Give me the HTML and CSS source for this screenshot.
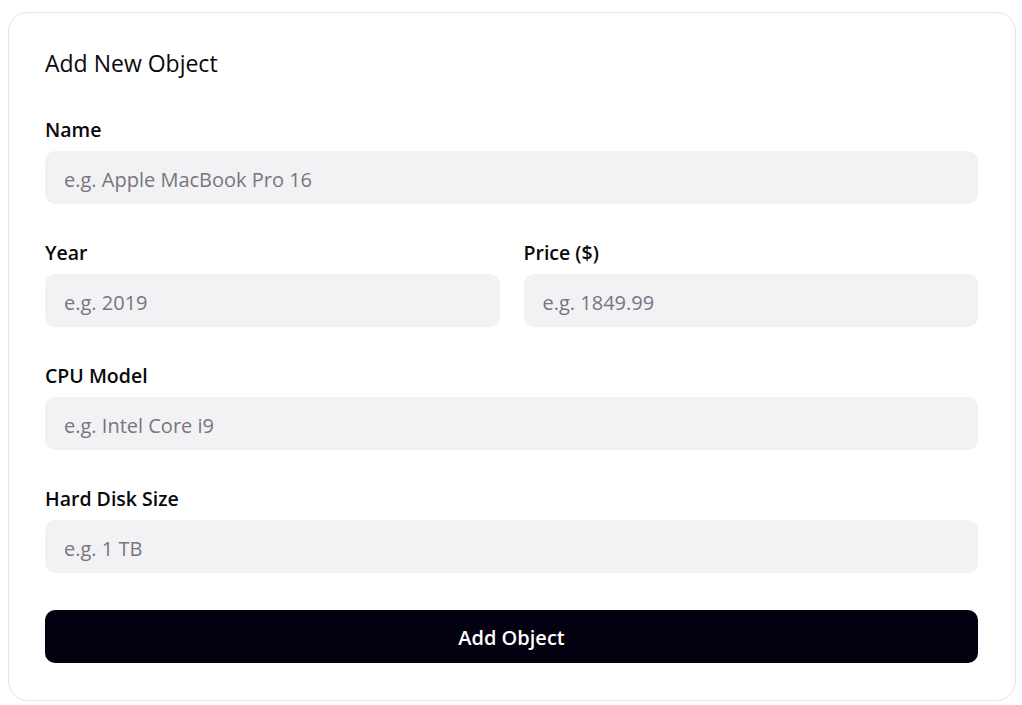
FILE: index.html
```html
<!DOCTYPE html>
<html lang="en">
<head>
<meta charset="utf-8">
<title>Add New Object</title>
<link rel="stylesheet" href="styles.css">
</head>
<body>
<form class="card">
  <h2 class="title">Add New Object</h2>
  <div class="fields">
    <div class="field">
      <label class="label" for="name">Name</label>
      <input class="input" id="name" type="text" placeholder="e.g. Apple MacBook Pro 16">
    </div>
    <div class="row">
      <div class="field">
        <label class="label" for="year">Year</label>
        <input class="input" id="year" type="text" placeholder="e.g. 2019">
      </div>
      <div class="field">
        <label class="label" for="price">Price ($)</label>
        <input class="input" id="price" type="text" placeholder="e.g. 1849.99">
      </div>
    </div>
    <div class="field">
      <label class="label" for="cpu">CPU Model</label>
      <input class="input" id="cpu" type="text" placeholder="e.g. Intel Core i9">
    </div>
    <div class="field">
      <label class="label" for="disk">Hard Disk Size</label>
      <input class="input" id="disk" type="text" placeholder="e.g. 1 TB">
    </div>
    <button class="button" type="button">Add Object</button>
  </div>
</form>
</body>
</html>
```

FILE: styles.css
```css
* { box-sizing: border-box; }
html, body { margin: 0; background: #ffffff; }
body {
  padding: 12px 6px 0 8px;
  font-family: "Open Sans", "Noto Sans", sans-serif;
  color: #09090b;
}
.card {
  width: 1008px;
  height: 689px;
  border: 1px solid #e4e4e7;
  border-radius: 20px;
  padding: 36px 37px 36px 36px;
  background: #ffffff;
}
.title {
  margin: 0;
  font-size: 23px;
  line-height: 28px;
  font-weight: 400;
}
.fields {
  margin-top: 41px;
  display: flex;
  flex-direction: column;
  gap: 37px;
}
.field {
  display: flex;
  flex-direction: column;
  gap: 9px;
}
.row {
  display: grid;
  grid-template-columns: 1fr 1fr;
  gap: 24px;
}
.label {
  font-size: 19.5px;
  line-height: 24px;
  font-weight: 600;
}
.input {
  height: 53px;
  width: 100%;
  border: none;
  border-radius: 10px;
  background: #f2f2f4;
  padding: 3px 19px 0;
  font-family: inherit;
  font-size: 20px;
  color: #09090b;
  outline: none;
}
.input::placeholder { color: #76767f; }
.button {
  height: 53px;
  width: 100%;
  border: none;
  border-radius: 10px;
  background: #03000f;
  color: #ffffff;
  font-family: inherit;
  font-size: 20px;
  font-weight: 600;
  padding-top: 2px;
}
```
